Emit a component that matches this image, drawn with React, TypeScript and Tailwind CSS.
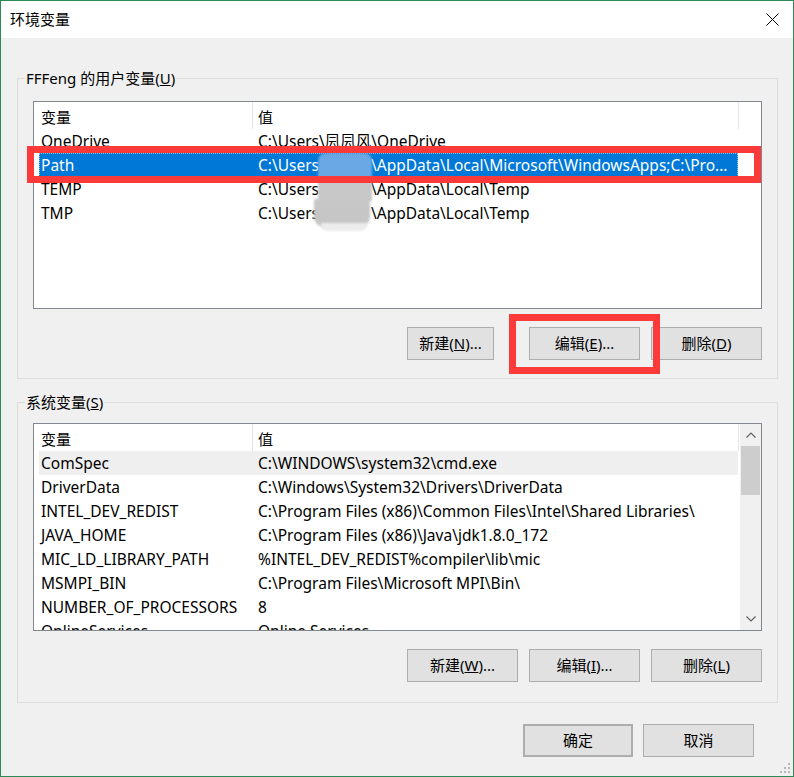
const userVars = [
  { name: 'OneDrive', value: 'C:\\Users\\凨凨风\\OneDrive' },
  { name: 'Path', value: 'C:\\Users', rest: '\\AppData\\Local\\Microsoft\\WindowsApps;C:\\Pro...', selected: true },
  { name: 'TEMP', value: 'C:\\Users', rest: '\\AppData\\Local\\Temp' },
  { name: 'TMP', value: 'C:\\Users', rest: '\\AppData\\Local\\Temp' },
]

const sysVars = [
  { name: 'ComSpec', value: 'C:\\WINDOWS\\system32\\cmd.exe', hover: true },
  { name: 'DriverData', value: 'C:\\Windows\\System32\\Drivers\\DriverData' },
  { name: 'INTEL_DEV_REDIST', value: 'C:\\Program Files (x86)\\Common Files\\Intel\\Shared Libraries\\' },
  { name: 'JAVA_HOME', value: 'C:\\Program Files (x86)\\Java\\jdk1.8.0_172' },
  { name: 'MIC_LD_LIBRARY_PATH', value: '%INTEL_DEV_REDIST%compiler\\lib\\mic' },
  { name: 'MSMPI_BIN', value: 'C:\\Program Files\\Microsoft MPI\\Bin\\' },
  { name: 'NUMBER_OF_PROCESSORS', value: '8' },
  { name: 'OnlineServices', value: 'Online Services' },
]

type Row = { name: string; value: string; rest?: string; selected?: boolean; hover?: boolean }

function Header() {
  return (
    <div className="flex h-[27px] shrink-0 bg-white">
      <div className="w-[219px] border-r border-[#e5e5e5] pl-[7px] pt-[3px] flex items-center">变量</div>
      <div className="w-[486px] border-r border-[#e5e5e5] pl-[5px] pt-[3px] flex items-center">值</div>
    </div>
  )
}

function ListRow({ row }: { row: Row }) {
  const bg = row.selected
    ? 'bg-[#0078d7] text-white outline outline-1 outline-dotted outline-offset-[-1px] outline-[#ffffff90]'
    : row.hover
      ? 'bg-[#efefef]'
      : ''
  return (
    <div className={`ml-[5px] w-[699px] h-[24px] shrink-0 flex items-center pt-[2px] whitespace-nowrap text-[15.5px] ${bg}`}>
      <div className="w-[219px] pl-[2px]">{row.name}</div>
      <div className="flex-1 overflow-hidden">
        {row.value}
        {row.rest && <span className="inline-block w-[52px]" />}
        {row.rest}
      </div>
    </div>
  )
}

function Btn({ children, w = 'w-[111px]', extra = '' }: { children: React.ReactNode; w?: string; extra?: string }) {
  return (
    <div className={`${w} h-[33px] bg-[#e1e1e1] border border-[#adadad] flex items-center justify-center ${extra}`}>
      {children}
    </div>
  )
}

function Chevron({ down }: { down?: boolean }) {
  return (
    <svg width="10" height="6" viewBox="0 0 10 6" className="block">
      <path d={down ? 'M0.5 0.5 L5 5 L9.5 0.5' : 'M0.5 5.5 L5 1 L9.5 5.5'} fill="none" stroke="#606060" strokeWidth="1.2" />
    </svg>
  )
}

export default function App() {
  return (
    <div
      className="relative w-[794px] h-[777px] border border-[#2b8a55] bg-[#f0f0f0] text-black text-[15px] flex flex-col overflow-hidden"
      style={{ fontFamily: '"Noto Sans", "Noto Sans CJK SC", sans-serif' }}
    >
      <div className="h-[37px] shrink-0 bg-white flex items-center justify-between pl-[9px] pr-[14px]">
        <span>环境变量</span>
        <svg width="13" height="13" viewBox="0 0 13 13">
          <path d="M0.5 0.5 L12.5 12.5 M12.5 0.5 L0.5 12.5" stroke="#000" strokeWidth="1" />
        </svg>
      </div>

      <div className="flex flex-col pl-[16px] pr-[15px]">
        {/* user variables */}
        <div className="relative mt-[40px] h-[301px] border border-[#dcdcdc] pl-[15px] pr-[15px] pt-[22px] flex flex-col">
          <span className="absolute top-[-11px] left-[7px] px-[1px] bg-[#f0f0f0] leading-[20px]">
            FFFeng 的用户变量(<span className="underline">U</span>)
          </span>
          <div className="h-[208px] border border-[#828790] bg-white flex flex-col overflow-hidden">
            <Header />
            {userVars.map((r) => (
              <ListRow key={r.name} row={r} />
            ))}
          </div>
          <div className="mt-[18px] flex justify-end gap-[11px]">
            <Btn w="w-[87px]" extra="mr-[24px]">
              新建(<span className="underline">N</span>)...
            </Btn>
            <Btn>
              编辑(<span className="underline">E</span>)...
            </Btn>
            <Btn>
              删除(<span className="underline">D</span>)
            </Btn>
          </div>
        </div>

        {/* system variables */}
        <div className="relative mt-[23px] h-[301px] border border-[#dcdcdc] pl-[15px] pr-[15px] pt-[20px] flex flex-col">
          <span className="absolute top-[-11px] left-[7px] px-[1px] bg-[#f0f0f0] leading-[20px]">
            系统变量(<span className="underline">S</span>)
          </span>
          <div className="h-[208px] border border-[#828790] bg-white flex overflow-hidden">
            <div className="flex-1 flex flex-col overflow-hidden">
              <Header />
              {sysVars.map((r) => (
                <ListRow key={r.name} row={r} />
              ))}
            </div>
            <div className="w-[21px] bg-[#f0f0f0] flex flex-col items-center">
              <div className="h-[22px] flex items-center justify-center">
                <Chevron />
              </div>
              <div className="w-[19px] h-[49px] bg-[#cdcdcd]" />
              <div className="flex-1" />
              <div className="h-[22px] flex items-center justify-center">
                <Chevron down />
              </div>
            </div>
          </div>
          <div className="mt-[18px] flex justify-end gap-[11px]">
            <Btn>
              新建(<span className="underline">W</span>)...
            </Btn>
            <Btn>
              编辑(<span className="underline">I</span>)...
            </Btn>
            <Btn>
              删除(<span className="underline">L</span>)
            </Btn>
          </div>
        </div>

        <div className="mt-[21px] mr-[24px] flex justify-end gap-[10px]">
          <Btn w="w-[110px]" extra="border-2 border-[#0078d7]">确定</Btn>
          <Btn w="w-[111px]">取消</Btn>
        </div>
      </div>

      {/* blurred user name */}
      <div className="absolute left-[317px] top-[152px] w-[54px] h-[24px] rounded-t-[8px] bg-[#69a8e4] blur-[1px]" />
      <div className="absolute left-[317px] top-[176px] w-[54px] h-[24px] bg-[#c8c8c8] blur-[1px]" />
      <div className="absolute left-[313px] top-[198px] w-[56px] h-[28px] rounded-b-[10px] bg-[#c6c6c6] blur-[1px]" />
      <div className="absolute left-[320px] top-[222px] w-[46px] h-[8px] rounded-b-[6px] bg-[#ececec] blur-[1px]" />

      {/* red annotation boxes */}
      <div className="absolute left-[26px] top-[145px] w-[734px] h-[37px] border-[7px] border-[#fc3a3a]" />
      <div className="absolute left-[508px] top-[313px] w-[151px] h-[60px] border-[7px] border-[#fc3a3a]" />

      {/* resize grip */}
      <svg className="absolute right-[2px] bottom-[2px]" width="12" height="12" viewBox="0 0 12 12">
        <rect x="9" y="1" width="2" height="2" fill="#b8b8b8" />
        <rect x="5" y="5" width="2" height="2" fill="#b8b8b8" />
        <rect x="9" y="5" width="2" height="2" fill="#b8b8b8" />
        <rect x="1" y="9" width="2" height="2" fill="#b8b8b8" />
        <rect x="5" y="9" width="2" height="2" fill="#b8b8b8" />
        <rect x="9" y="9" width="2" height="2" fill="#b8b8b8" />
      </svg>
    </div>
  )
}
